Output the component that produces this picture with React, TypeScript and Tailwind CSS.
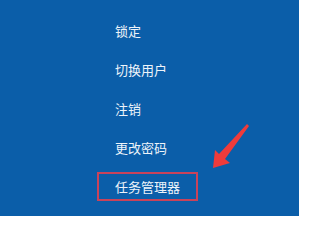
const items = ["锁定", "切换用户", "注销", "更改密码"];

export default function App() {
  return (
    <div
      className="relative w-[299px] h-[216px] overflow-hidden bg-[#0b5ea9] text-[#eef4fa]"
      style={{ fontFamily: '"Noto Sans CJK SC", "Noto Sans", sans-serif' }}
    >
      <div className="flex flex-col pt-[11px] pl-[97px]">
        {items.map((label) => (
          <div key={label} className="h-[39px] flex items-center pl-[18px] text-[13px] leading-[13px]">
            {label}
          </div>
        ))}
        <div className="h-[39px] flex items-center">
          <div className="h-[29px] flex items-center px-[16px] border-2 border-[#c9435a] text-[13px] leading-[13px]">
            任务管理器
          </div>
        </div>
      </div>

      {/* red arrow pointing at the box */}
      <svg className="absolute left-0 top-0" width="299" height="216" viewBox="0 0 299 216">
        <path
          d="M249 126 L225 159 L230 163 L213 168 L215 150 L219 154 L247 124 Z"
          fill="#ef3b3b"
        />
      </svg>
    </div>
  );
}
